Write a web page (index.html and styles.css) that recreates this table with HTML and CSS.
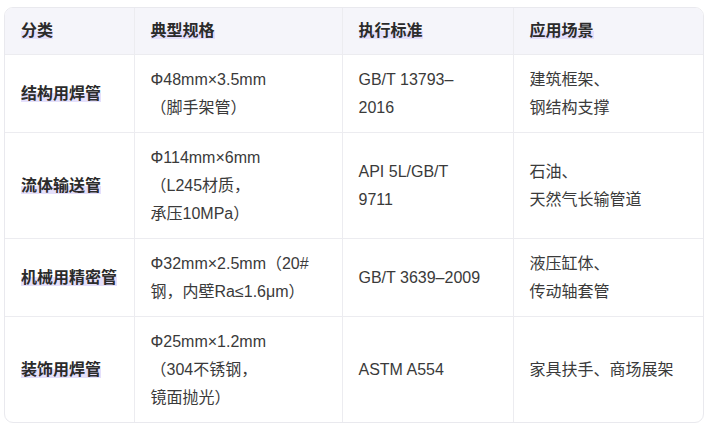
FILE: index.html
```html
<!DOCTYPE html>
<html lang="zh-CN">
<head>
<meta charset="utf-8">
<title>焊管分类</title>
<link rel="stylesheet" href="styles.css">
</head>
<body>
<div class="page">
  <div class="table-wrap">
    <table class="spec-table">
      <colgroup>
        <col class="c1"><col class="c2"><col class="c3"><col class="c4">
      </colgroup>
      <thead>
        <tr>
          <th><span class="mark">分类</span></th>
          <th><span class="mark">典型规格</span></th>
          <th><span class="mark">执行标准</span></th>
          <th><span class="mark">应用场景</span></th>
        </tr>
      </thead>
      <tbody>
        <tr>
          <td class="name"><span class="mark">结构用焊管</span></td>
          <td>Φ48mm×3.5mm<br>（脚手架管）</td>
          <td>GB/T 13793–<br>2016</td>
          <td>建筑框架、<br>钢结构支撑</td>
        </tr>
        <tr>
          <td class="name"><span class="mark">流体输送管</span></td>
          <td>Φ114mm×6mm<br>（L245材质，<br>承压10MPa）</td>
          <td>API 5L/GB/T<br>9711</td>
          <td>石油、<br>天然气长输管道</td>
        </tr>
        <tr>
          <td class="name"><span class="mark">机械用精密管</span></td>
          <td>Φ32mm×2.5mm（20#<br>钢，内壁Ra≤1.6μm）</td>
          <td>GB/T 3639–2009</td>
          <td>液压缸体、<br>传动轴套管</td>
        </tr>
        <tr>
          <td class="name"><span class="mark">装饰用焊管</span></td>
          <td>Φ25mm×1.2mm<br>（304不锈钢，<br>镜面抛光）</td>
          <td>ASTM A554</td>
          <td>家具扶手、商场展架</td>
        </tr>
      </tbody>
    </table>
  </div>
</div>
</body>
</html>
```

FILE: styles.css
```css
html, body {
  margin: 0;
  padding: 0;
  background: #ffffff;
}

body {
  font-family: "Liberation Sans", "Noto Sans CJK SC", sans-serif;
  font-size: 16px;
  color: #3a3a3a;
}

.page {
  padding: 7px 15px 14px 4px;
}

.table-wrap {
  width: 700px;
  box-sizing: border-box;
  border: 1px solid #e9e9ee;
  border-radius: 9px;
  overflow: hidden;
}

.spec-table {
  width: 698px;
  table-layout: fixed;
  border-collapse: collapse;
  line-height: 28px;
}

.c1 { width: 129px; }
.c2 { width: 208px; }
.c3 { width: 171px; }
.c4 { width: 190px; }

.spec-table th,
.spec-table td {
  text-align: left;
  vertical-align: middle;
  border-right: 1px solid #ececf0;
  border-bottom: 1px solid #ececf0;
  padding: 10.5px 16px;
}

.spec-table th:last-child,
.spec-table td:last-child {
  border-right: none;
}

.spec-table tbody tr:last-child td {
  border-bottom: none;
}

.spec-table thead th {
  background: #f5f5fa;
  font-weight: 600;
  color: #2b2b2b;
  padding: 9px 16px;
}

.spec-table td.name {
  font-weight: 600;
  color: #2b2b2b;
}

.mark {
  background: linear-gradient(transparent 50%, #e4dffb 50%);
}
```
